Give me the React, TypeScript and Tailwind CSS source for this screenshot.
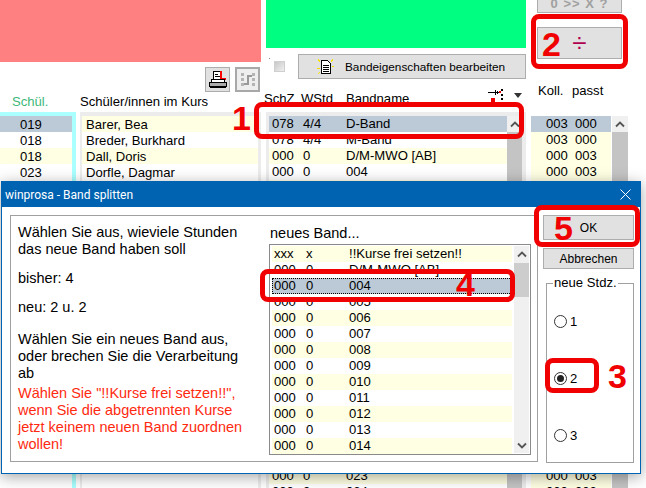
const ROW_TEXT = "font-['Liberation_Sans',Arial,sans-serif]";

const names = ["Barer, Bea", "Breder, Burkhard", "Dall, Doris", "Dorfle, Dagmar"];
const schuel = ["019", "018", "018", "023"];

const bands: [string, string, string][] = [
  ["078", "4/4", "D-Band"],
  ["078", "4/4", "M-Band"],
  ["000", "0", "D/M-MWO [AB]"],
  ["000", "0", "004"],
  ...Array.from({ length: 18 }, (_, i): [string, string, string] => ["000", "0", String(i + 5).padStart(3, "0")]),
  ["000", "0", "023"],
  ["000", "0", "024"],
];

const dialogRows: [string, string, string][] = [
  ["xxx", "x", "!!Kurse frei setzen!!"],
  ["000", "0", "D/M-MWO [AB]"],
  ["000", "0", "004"],
  ["000", "0", "005"],
  ["000", "0", "006"],
  ["000", "0", "007"],
  ["000", "0", "008"],
  ["000", "0", "009"],
  ["000", "0", "010"],
  ["000", "0", "011"],
  ["000", "0", "012"],
  ["000", "0", "013"],
  ["000", "0", "014"],
];

const SELECTED = "bg-[#bccad8]";
const CREAM = "bg-[#ffffe3]";

function Chevron({ down = false }: { down?: boolean }) {
  return (
    <svg width="10" height="7" viewBox="0 0 10 7" className={down ? "rotate-180" : ""}>
      <path d="M1 5.5 L5 1.5 L9 5.5" fill="none" stroke="#555" strokeWidth="1.8" />
    </svg>
  );
}

function PageScrollbar({ className }: { className: string }) {
  return (
    <div className={`flex flex-col shrink-0 ${className}`}>
      <div className="h-4 bg-[#f0f0f0] flex items-center justify-center shrink-0">
        <Chevron />
      </div>
      <div className="flex-1 bg-[#c4c4c4]" />
    </div>
  );
}

function PrinterIcon() {
  return (
    <svg width="18" height="18" viewBox="0 0 18 18" shapeRendering="crispEdges">
      <path d="M4.5 0.5h7v8h-7z" fill="#fff" stroke="#000" />
      <path d="M6 3h3v1H6zM6 5h5v1H6z" fill="#000" />
      <path d="M11 0h2v7h4v2h-6z" fill="#f00" />
      <path d="M2.5 8.5h13v3h-13z" fill="#fff" stroke="#000" />
      <path d="M0.5 11.5h17v4h-17z" fill="#aaa" stroke="#000" />
      <path d="M1 16h16v1H1z" fill="#000" />
    </svg>
  );
}

function StepsIcon() {
  return (
    <svg width="20" height="20" viewBox="0 0 20 20" shapeRendering="crispEdges">
      <path d="M3 3h3v3H3zM3 8h3v3H3zM3 13h3v3H3zM14 3h3v3h-3zM14 8h3v3h-3zM14 13h3v3h-3z" fill="#b4b4b4" />
      <path d="M6 14h4V6h4" fill="none" stroke="#999" strokeWidth="2" />
    </svg>
  );
}

function DocIcon() {
  return (
    <svg width="18" height="18" viewBox="0 0 18 18" shapeRendering="crispEdges">
      <path d="M1 1l2 3M16 1l-2 3M0 10h3M1 16l2-2M17 8h-2" stroke="#f5e000" />
      <path d="M4.5 2.5h6l3 3v10h-9z" fill="#fff" stroke="#000" />
      <path d="M6 7h6v1H6zM6 9h6v1H6zM6 11h6v1H6zM6 13h6v1H6z" fill="#000" />
    </svg>
  );
}

function SortIcon() {
  return (
    <svg width="18" height="13" viewBox="0 0 18 13" shapeRendering="crispEdges">
      <path d="M0 3h9v1H0zM7 1h1v5H7zM9 2h1v3H9zM10 3h1v1h-1z" fill="#000" />
      <path d="M13 0h2v2h-2zM13 5h2v2h-2zM13 9h2v2h-2z" fill="#000" />
      <path d="M11 2h2v2h-2z" fill="#e00" />
      <path d="M3 9h4v4H3z" fill="#e00" />
    </svg>
  );
}

function Button({ className, children }: { className: string; children: React.ReactNode }) {
  return (
    <div className={`bg-[#e1e1e1] border border-[#adadad] flex items-center justify-center shrink-0 ${className}`}>
      {children}
    </div>
  );
}

function Radio({ label, checked = false }: { label: string; checked?: boolean }) {
  return (
    <div className="h-[57px] flex items-center pl-[7px] gap-[3px]">
      <span className="w-[13px] h-[13px] rounded-full border border-[#333] bg-white flex items-center justify-center">
        {checked && <span className="w-[7px] h-[7px] rounded-full bg-[#222]" />}
      </span>
      <span className="text-[13.1px] leading-4 text-black">{label}</span>
    </div>
  );
}

function Mark({ className }: { className: string }) {
  return <div className={`absolute border-[5px] border-[#f00000] rounded-[8px] ${className}`} />;
}

function Num({ className, children }: { className: string; children: React.ReactNode }) {
  return (
    <span className={`absolute font-bold text-[#f00000] text-[34px] leading-none ${className}`}>{children}</span>
  );
}

function Background() {
  return (
    <div className="flex gap-[5px] h-full">
      <div className="w-[261px] flex flex-col shrink-0">
        <div className="h-[62px] bg-[#ff8080] shrink-0" />
        <div className="flex justify-end gap-[5px] mt-[5px] pr-px h-[25px] shrink-0">
          <div className="w-[25px] h-[25px] bg-[#e1e1e1] border border-[#adadad] flex items-center justify-center">
            <PrinterIcon />
          </div>
          <div className="w-[25px] h-[25px] bg-[#eeeeee] border-2 border-[#a8a8a8] flex items-center justify-center">
            <StepsIcon />
          </div>
        </div>
        <div className="flex h-[16px] mt-[1px] leading-4 shrink-0">
          <span className="w-[80px] pl-3 mt-[1px] text-[#3cb878]">Schül.</span>
          <span className="mt-[1px] text-black">Schüler/innen im Kurs</span>
        </div>
        <div className="flex flex-1 min-h-0 mt-[3px]">
          <div className="w-[76px] border-r-4 border-t-4 border-[#aaffff]">
            {schuel.map((s, i) => (
              <div key={i} className={`h-4 leading-[18px] pl-5 ${i === 0 ? SELECTED : i === 2 ? CREAM : ""}`}>
                {s}
              </div>
            ))}
          </div>
          <div className="flex-1 ml-1 border-t-4 border-l-2 border-r-[3px] border-[#ececec]">
            {names.map((n, i) => (
              <div key={n} className={`h-4 leading-[18px] pl-1 ${i === 0 || i === 2 ? CREAM : ""}`}>
                {n}
              </div>
            ))}
          </div>
        </div>
      </div>

      <div className="w-[260px] flex flex-col shrink-0">
        <div className="h-12 bg-[#00ff80] shrink-0" />
        <div className="flex items-center mt-[6px] h-[25px] shrink-0">
          <span className="w-px h-px bg-[#888] ml-[3px] -mt-[16px]" />
          <span className="w-[11px] h-[11px] ml-1 bg-gradient-to-br from-[#c8c8c8] to-[#f0f0f0] border border-[#cfcfcf]" />
          <Button className="ml-[13px] w-[228px] h-[25px] gap-[10px] justify-start pl-[18px]">
            <DocIcon />
            <span className="text-[11.8px] leading-4 text-black whitespace-nowrap">Bandeigenschaften bearbeiten</span>
          </Button>
        </div>
        <div className="relative flex h-4 mt-[12px] leading-4 text-black shrink-0">
          <span className="w-[37px] -ml-[2px]">SchZ</span>
          <span className="w-[45px]">WStd</span>
          <span>Bandname</span>
          <span className="absolute left-[222px] top-[-2px]">
            <SortIcon />
          </span>
          <span className="absolute left-[248px] top-[2px] w-0 h-0 border-l-[4px] border-r-[4px] border-t-[5px] border-l-transparent border-r-transparent border-t-[#333]" />
        </div>
        <div className="flex flex-1 min-h-0 mt-[5px] border-t-4 border-l-[3px] border-r-4 border-[#ececec]">
          <div className="w-[238px]">
            {bands.map((b, i) => (
              <div key={i} className={`h-4 leading-4 flex pl-[3px] ${i === 0 ? SELECTED : i % 2 === 0 ? CREAM : ""}`}>
                <span className="w-[31px]">{b[0]}</span>
                <span className="w-[43px]">{b[1]}</span>
                <span>{b[2]}</span>
              </div>
            ))}
          </div>
          <PageScrollbar className="w-[15px]" />
        </div>
      </div>

      <div className="flex-1 flex flex-col pl-[6px]">
        <Button className="w-[85px] h-[13px] overflow-hidden border-t-0">
          <span className="text-[13px] leading-3 -mt-[5px] font-bold tracking-[1px] text-[#a0a0a0] whitespace-nowrap">0 &gt;&gt; X ?</span>
        </Button>
        <Button className="w-[85px] h-[32px] mt-[14px]">
          <span className="text-[26px] leading-none text-[#b0004f]">÷</span>
        </Button>
        <div className="flex mt-[24px] h-4 leading-4 text-black pl-px shrink-0">
          <span className="w-[34px]">Koll.</span>
          <span>passt</span>
        </div>
        <div className="flex flex-1 min-h-0 mt-[17px] -ml-[6px]">
          <div className="w-[80px]">
            {bands.map((_, i) => (
              <div key={i} className={`h-4 leading-4 flex pl-[15px] ${i === 0 ? SELECTED : CREAM}`}>
                <span className="w-[29px]">{i < 2 ? "003" : "000"}</span>
                <span>{i < 2 ? "000" : "003"}</span>
              </div>
            ))}
          </div>
          <PageScrollbar className="w-[16px] ml-px" />
        </div>
      </div>
    </div>
  );
}

function Dialog() {
  return (
    <div className="absolute left-[1px] top-[181px] w-[640px] h-[293px] bg-white border border-[#0063b1] shadow-[0_3px_14px_rgba(0,0,0,0.35)] flex flex-col">
      <div className="h-[25px] bg-[#0063b1] flex items-center justify-between pl-[3px] pr-[9px] shrink-0">
        <span className="font-['Roboto',sans-serif] text-[12px] text-white">winprosa - Band splitten</span>
        <svg width="11" height="11" viewBox="0 0 11 11">
          <path d="M0.5 0.5 L10.5 10.5 M10.5 0.5 L0.5 10.5" stroke="#fff" strokeWidth="1" />
        </svg>
      </div>
      <div className="flex pl-2 pt-2 gap-[5px]">
        <div className="w-[528px] h-[247px] border border-[#a0a0a0] flex">
          <div className="w-[258px] pl-[7px] pt-2 text-[14.5px] leading-[17px] text-black">
            <p>
              Wählen Sie aus, wieviele Stunden
              <br />
              das neue Band haben soll
            </p>
            <p className="mt-3">bisher: 4</p>
            <p className="mt-3">neu: 2 u. 2</p>
            <p className="mt-[15px]">
              Wählen Sie ein neues Band aus,
              <br />
              oder brechen Sie die Verarbeitung
              <br />
              ab
            </p>
            <p className="mt-[3px] text-[#ff2a10]">
              Wählen Sie "!!Kurse frei setzen!!",
              <br />
              wenn Sie die abgetrennten Kurse
              <br />
              jetzt keinem neuen Band zuordnen
              <br />
              wollen!
            </p>
          </div>
          <div className="flex flex-col pt-[9px]">
            <span className="text-[14.5px] leading-[17px] pl-px text-black">neues Band...</span>
            <div className="mt-[2px] w-[262px] h-[211px] border border-[#8a8a8a] flex overflow-hidden py-px pl-[2px]">
              <div className="w-[240px]">
                {dialogRows.map((r, i) => (
                  <div
                    key={i}
                    className={`h-4 leading-4 flex pl-[2px] ${
                      i === 2 ? `${SELECTED} outline-1 -outline-offset-1 outline-dotted outline-black` : i % 2 === 0 ? CREAM : ""
                    }`}
                  >
                    <span className="w-[32px]">{r[0]}</span>
                    <span className="w-[43px]">{r[1]}</span>
                    <span>{r[2]}</span>
                  </div>
                ))}
              </div>
              <div className="w-[15px] ml-[2px] flex flex-col bg-[#f0f0f0]">
                <div className="h-4 flex items-center justify-center">
                  <Chevron />
                </div>
                <div className="h-[34px] bg-[#cdcdcd] mt-px" />
                <div className="flex-1" />
                <div className="h-4 flex items-center justify-center">
                  <Chevron down />
                </div>
              </div>
            </div>
          </div>
        </div>
        <div className="w-[91px] flex flex-col">
          <Button className="h-[25px] text-[12px] text-black">OK</Button>
          <Button className="h-[21px] mt-2 text-[12px] text-black">Abbrechen</Button>
          <div className="relative w-[88px] h-[180px] mt-[14px] ml-[3px] border border-[#a0a0a0] pt-[9px]">
            <span className="absolute left-[6px] -top-[9px] bg-white px-px leading-4 text-black">neue Stdz.</span>
            <Radio label="1" />
            <Radio label="2" checked />
            <Radio label="3" />
          </div>
        </div>
      </div>
    </div>
  );
}

export default function App() {
  return (
    <div className={`relative w-[646px] h-[488px] overflow-hidden bg-white text-[13.1px] text-black ${ROW_TEXT}`}>
      <Background />
      <Mark className="left-[254px] top-[102px] w-[270px] h-[37px]" />
      <Num className="left-[232px] top-[101px]">1</Num>
      <Mark className="left-[531px] top-[14px] w-[97px] h-[55px]" />
      <Num className="left-[542px] top-[27px]">2</Num>
      <Dialog />
      <Mark className="left-[545px] top-[358px] w-[54px] h-[35px]" />
      <Num className="left-[608px] top-[359px]">3</Num>
      <Mark className="left-[260px] top-[269px] w-[255px] h-[33px]" />
      <Num className="left-[456px] top-[267px]">4</Num>
      <Mark className="left-[534px] top-[205px] w-[106px] h-[42px]" />
      <Num className="left-[554px] top-[211px]">5</Num>
    </div>
  );
}
